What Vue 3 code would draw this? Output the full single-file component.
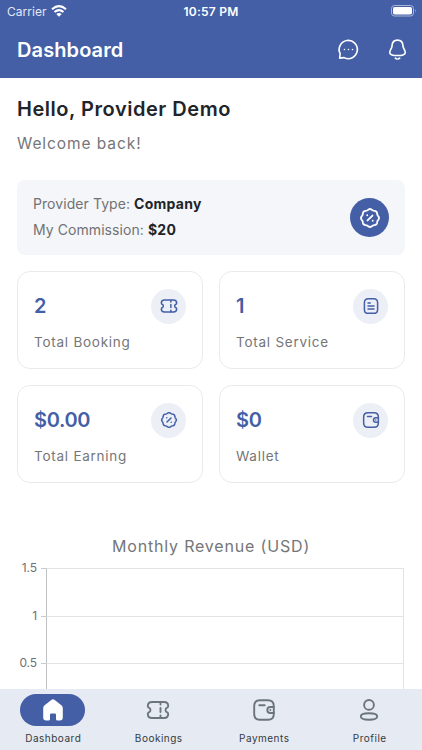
<script setup>
import { h } from 'vue'

// Eight-lobed outline of the percent badge.
const points = []
for (let i = 0; i < 96; i++) {
  const a = (i / 96) * Math.PI * 2
  const r = 9.3 + 0.5 * Math.cos(8 * a)
  points.push(`${(12 + r * Math.sin(a)).toFixed(2)} ${(12 - r * Math.cos(a)).toFixed(2)}`)
}
const badge = `M${points.join('L')}Z`

const icons = {
  chat: ['M2.8 21l.5-4.6A9.5 9.5 0 1 1 7.4 20.5Z', 'M7.8 12h.01M12 12h.01M16.2 12h.01'],
  bell: ['M12 2.2c-3.4 0-5.5 2.4-5.7 5.8-.1 3-2.4 4.7-2.4 7 0 2.7 3.7 3.3 8.1 3.3s8.1-.6 8.1-3.3c0-2.3-2.3-4-2.4-7-.2-3.4-2.3-5.8-5.7-5.8Z', 'M9.7 21.1c1.2 1.1 3.4 1.1 4.6 0'],
  percent: [badge, 'M9.3 14.7l5.4-5.4M9 9h.01M15 15h.01'],
  ticket: ['M6 4H18Q22.2 4 22.2 8Q22.2 9.200 21.2 9.6A2.55 2.55 0 0 0 21.2 14.4Q22.2 14.8 22.2 16Q22.2 20 18 20H6Q1.8 20 1.8 16Q1.8 14.8 2.8 14.4A2.55 2.55 0 0 0 2.8 9.6Q1.8 9.2 1.8 8Q1.8 4 6 4Z', 'M14.5 4.5v2M14.5 10v4M14.5 17.5v2'],
  document: ['M8.5 2.2h7q5.3 0 5.3 5.3v9q0 5.3-5.3 5.3h-7q-5.3 0-5.3-5.3v-9q0-5.3 5.3-5.3Z', 'M8 8h3M8 12h8M8 16h8'],
  wallet: ['M8 2.2h8q5.8 0 5.8 5.8v8q0 5.8-5.8 5.8H8q-5.8 0-5.8-5.8V8q0-5.8 5.8-5.8Z', 'M7.3 7.3h5.4', 'M21.8 9h-3.5a3 3 0 0 0 0 6h3.5M18.4 12h.01'],
  profile: ['M12 2a4.9 4.9 0 1 1 0 9.8a4.9 4.9 0 1 1 0-9.8Z', 'M12 15.3c5.3 0 8.2 1.1 8.2 3.2s-2.9 3.2-8.2 3.2-8.2-1.1-8.2-3.2 2.9-3.2 8.2-3.2Z']
}

const Icon = (props) =>
  h('svg', { viewBox: '0 0 24 24', fill: 'none', stroke: 'currentColor', 'stroke-width': props.weight || 1.8, 'stroke-linecap': 'round', 'stroke-linejoin': 'round' },
    icons[props.name].map((d) => h('path', { d })))
Icon.props = ['name', 'weight']

const stats = [
  { value: '2', label: 'Total Booking', icon: 'ticket' },
  { value: '1', label: 'Total Service', icon: 'document' },
  { value: '$0.00', label: 'Total Earning', icon: 'percent' },
  { value: '$0', label: 'Wallet', icon: 'wallet' }
]
const ticks = ['1.5', '1', '0.5']
const tabs = [
  { label: 'Dashboard', icon: 'home', active: true },
  { label: 'Bookings', icon: 'ticket' },
  { label: 'Payments', icon: 'wallet' },
  { label: 'Profile', icon: 'profile' }
]
</script>

<template>
  <div class="screen">
    <header class="top">
      <div class="status">
        <div class="carrier">
          <span>Carrier</span>
          <svg class="wifi" viewBox="0 0 16 12">
            <path d="M1 4.3Q8-2 15 4.3M3.5 7Q8 3.2 12.5 7" fill="none" stroke="currentColor" stroke-width="2" />
            <path d="M8 11.7L5.3 9Q8 6.8 10.7 9Z" fill="currentColor" />
          </svg>
        </div>
        <strong class="time">10:57 PM</strong>
        <svg class="battery" viewBox="0 0 26 12">
          <rect x=".5" y=".5" width="22" height="10.5" rx="3" fill="none" stroke="#a9b6da" />
          <rect x="2" y="2" width="19" height="7.5" rx="1.7" fill="#fff" />
          <path d="M24 4q1.5 1.8 0 3.6Z" fill="#a9b6da" />
        </svg>
      </div>
      <div class="titlebar">
        <h1>Dashboard</h1>
        <div class="actions">
          <Icon name="chat" weight="1.7" class="top-icon" />
          <Icon name="bell" weight="1.7" class="top-icon" />
        </div>
      </div>
    </header>

    <main class="content">
      <h2>Hello, Provider Demo</h2>
      <p class="welcome">Welcome back!</p>

      <section class="info">
        <div class="info-text">
          <p><span>Provider Type: </span><b>Company</b></p>
          <p><span>My Commission: </span><b>$20</b></p>
        </div>
        <div class="info-badge"><Icon name="percent" weight="2" class="info-icon" /></div>
      </section>

      <section class="stats">
        <article v-for="s in stats" :key="s.label" class="card">
          <div class="card-head">
            <span class="value">{{ s.value }}</span>
            <div class="bubble"><Icon :name="s.icon" weight="2" class="card-icon" /></div>
          </div>
          <p class="card-label">{{ s.label }}</p>
        </article>
      </section>

      <section class="chart">
        <h3>Monthly Revenue (USD)</h3>
        <div class="plot">
          <div v-for="t in ticks" :key="t" class="tick-row">
            <span class="tick-label">{{ t }}</span>
            <i class="tick"></i>
            <div class="cell"></div>
          </div>
        </div>
      </section>
    </main>

    <nav class="tabs">
      <div v-for="t in tabs" :key="t.label" class="tab">
        <div class="pill" :class="{ active: t.active }">
          <svg v-if="t.icon === 'home'" class="tab-icon" viewBox="0 0 24 24">
            <path fill="#fff" d="M10.3 2q1.700-1.300 3.400 0l6.700 5.300q1.400 1.100 1.400 2.900v9.300q0 3-3 3h-2.300q-1.500 0-1.500-1.500v-4.300q0-1.200-1.200-1.200h-3.600q-1.200 0-1.200 1.200V21q0 1.500-1.500 1.500H5.200q-3 0-3-3v-9.300q0-1.800 1.400-2.900Z" />
          </svg>
          <Icon v-else :name="t.icon" weight="1.9" class="tab-icon" />
        </div>
        <span class="tab-label">{{ t.label }}</span>
      </div>
    </nav>
  </div>
</template>

<style>
body { margin: 0; background: #fff; }
</style>

<style scoped>
.screen { width: 422px; height: 750px; overflow: hidden; display: flex; flex-direction: column; background: #fff; font-family: Inter, "Liberation Sans", sans-serif; color: #212529; }
h1, h2, h3, p { margin: 0; }
svg { display: block; flex: none; }
.top { flex: none; height: 78px; background: #445fa6; color: #fff; }
.status { height: 22px; display: grid; grid-template-columns: 1fr auto 1fr; align-items: center; padding: 0 5px 0 7px; }
.carrier { display: flex; align-items: center; gap: 4px; font-size: 12px; letter-spacing: .05px; color: #e3e8f4; }
.wifi { width: 16px; height: 12px; color: #fff; }
.time { font-size: 12px; font-weight: 600; letter-spacing: .25px; margin-right: 2px; }
.battery { width: 26px; height: 12px; justify-self: end; }
.titlebar { height: 56px; box-sizing: border-box; padding: 0 13px 0 17px; display: flex; align-items: center; justify-content: space-between; }
h1 { font-size: 20px; line-height: 56px; font-weight: 600; letter-spacing: .1px; }
.actions { display: flex; gap: 26px; padding-bottom: 2px; }
.top-icon { width: 23px; height: 23px; }
.content { flex: 1; min-height: 0; overflow: hidden; padding: 17px 17px 0; }
h2 { font-size: 20px; line-height: 28px; font-weight: 600; letter-spacing: .53px; }
.welcome { margin-top: 9px; font-size: 15.5px; line-height: 24px; letter-spacing: .92px; color: #747678; }
.info { margin-top: 24px; height: 75px; box-sizing: border-box; border-radius: 8px; background: #f5f6f9; display: flex; align-items: center; justify-content: space-between; padding: 0 16px; }
.info-text { padding-bottom: 2px; }
.info-text p { font-size: 14px; line-height: 25.5px; white-space: pre; color: #707274; letter-spacing: .07px; }
.info-text b { color: #212529; font-weight: 700; letter-spacing: .25px; }
.info-badge { width: 39px; height: 39px; border-radius: 50%; background: #445fa6; color: #fff; display: grid; place-items: center; }
.info-icon { width: 22px; height: 22px; }
.stats { margin-top: 16px; display: grid; grid-template-columns: 1fr 1fr; gap: 16px; }
.card { height: 98px; box-sizing: border-box; border: 1px solid #e9eaec; border-radius: 13px; padding: 16.5px 16px 0; }
.card-head { display: flex; justify-content: space-between; align-items: center; }
.value { font-size: 20px; line-height: 35px; font-weight: 600; letter-spacing: -.35px; color: #445fa6; }
.bubble { width: 35px; height: 35px; border-radius: 50%; background: #eceff6; display: grid; place-items: center; color: #445fa6; }
.card-icon { width: 18px; height: 18px; }
.card-label { margin-top: 8px; font-size: 13.5px; line-height: 20px; letter-spacing: .75px; color: #747678; }
.chart { margin-top: 51px; }
h3 { height: 24px; font-size: 16px; line-height: 24px; font-weight: 400; letter-spacing: .82px; text-align: center; color: #747678; }
.plot { margin-top: 10px; }
.tick-row { display: grid; grid-template-columns: 20px 9px 358px; height: 47.6px; }
.tick-label { text-align: right; font-size: 12px; line-height: 16px; margin-top: -8px; letter-spacing: -.1px; color: #6d7175; }
.tick { justify-self: end; width: 5px; height: 1px; background: #c8c9cb; }
.cell { box-sizing: border-box; border-left: 1px solid #bfc1c3; border-top: 1px solid #e3e3e4; border-right: 1px solid #e3e3e4; }
.tabs { flex: none; height: 61px; background: #e6eaf2; display: grid; grid-template-columns: repeat(4, 1fr); }
.tab { display: flex; flex-direction: column; align-items: center; padding-top: 5px; }
.pill { width: 65px; height: 32px; border-radius: 16px; display: grid; place-items: center; color: #6c757d; }
.pill.active { background: #445fa6; }
.tab-icon { width: 24px; height: 24px; }
.tab-label { margin-top: 5px; padding-left: 1px; font-size: 10px; line-height: 14px; letter-spacing: .5px; color: #343a40; }
</style>
